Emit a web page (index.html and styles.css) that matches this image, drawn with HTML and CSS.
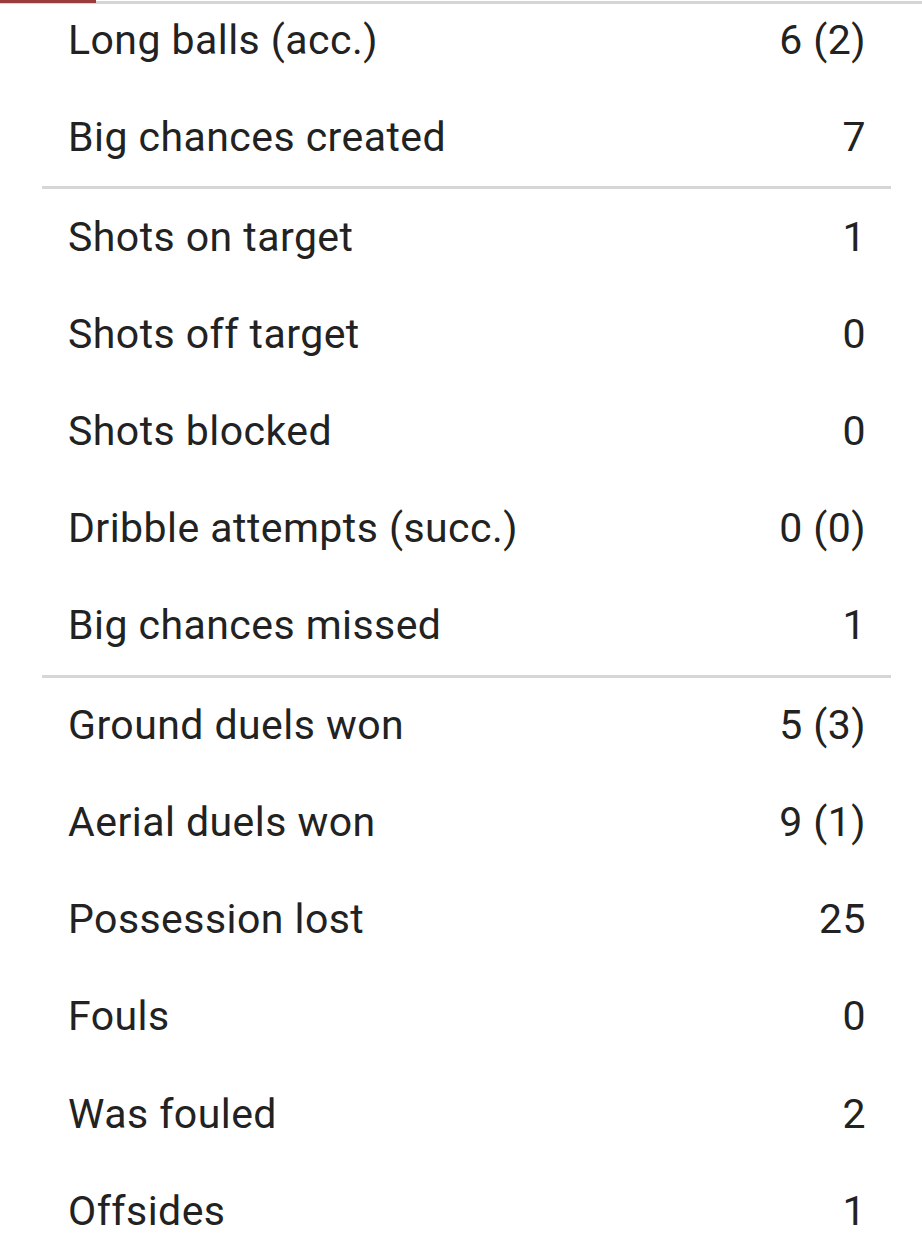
FILE: index.html
```html
<!DOCTYPE html>
<html lang="en">
<head>
<meta charset="utf-8">
<title>Player statistics</title>
<link rel="stylesheet" href="styles.css">
</head>
<body>
<div class="tabbar"><div class="tab-indicator"></div></div>
<div class="viewport">
  <div class="stats">
    <div class="row"><span class="label">Long balls (acc.)</span><span class="value">6 (2)</span></div>
    <div class="row"><span class="label">Big chances created</span><span class="value">7</span></div>
    <div class="divider"></div>
    <div class="row"><span class="label">Shots on target</span><span class="value">1</span></div>
    <div class="row"><span class="label">Shots off target</span><span class="value">0</span></div>
    <div class="row"><span class="label">Shots blocked</span><span class="value">0</span></div>
    <div class="row"><span class="label">Dribble attempts (succ.)</span><span class="value">0 (0)</span></div>
    <div class="row"><span class="label">Big chances missed</span><span class="value">1</span></div>
    <div class="divider"></div>
    <div class="row"><span class="label">Ground duels won</span><span class="value">5 (3)</span></div>
    <div class="row"><span class="label">Aerial duels won</span><span class="value">9 (1)</span></div>
    <div class="row"><span class="label">Possession lost</span><span class="value">25</span></div>
    <div class="row"><span class="label">Fouls</span><span class="value">0</span></div>
    <div class="row"><span class="label">Was fouled</span><span class="value">2</span></div>
    <div class="row"><span class="label">Offsides</span><span class="value">1</span></div>
  </div>
</div>
</body>
</html>
```

FILE: styles.css
```css
html, body {
  margin: 0;
  padding: 0;
  background: #ffffff;
}

body {
  width: 922px;
  height: 1245px;
  overflow: hidden;
  font-family: Roboto, "Liberation Sans", sans-serif;
  color: #222222;
}

.tabbar {
  position: relative;
  z-index: 2;
  height: 4px;
  background: linear-gradient(#ffffff 0 1px, #d5d5d5 1px 4px);
}

.tab-indicator {
  width: 96px;
  height: 2.5px;
  background: #9a3c3c;
}

.viewport {
  overflow: hidden;
  height: 1241px;
}

.stats {
  margin-top: -12px;
  display: flex;
  flex-direction: column;
}

.row {
  box-sizing: border-box;
  height: 97.1px;
  display: flex;
  align-items: center;
  justify-content: space-between;
  padding: 0 56px 2px 68px;
  font-size: 41px;
  letter-spacing: 0.45px;
  line-height: normal;
  flex-shrink: 0;
}

.divider {
  height: 3px;
  margin: 0 31px 0 42px;
  background: #d6d6d6;
  flex-shrink: 0;
}
```
